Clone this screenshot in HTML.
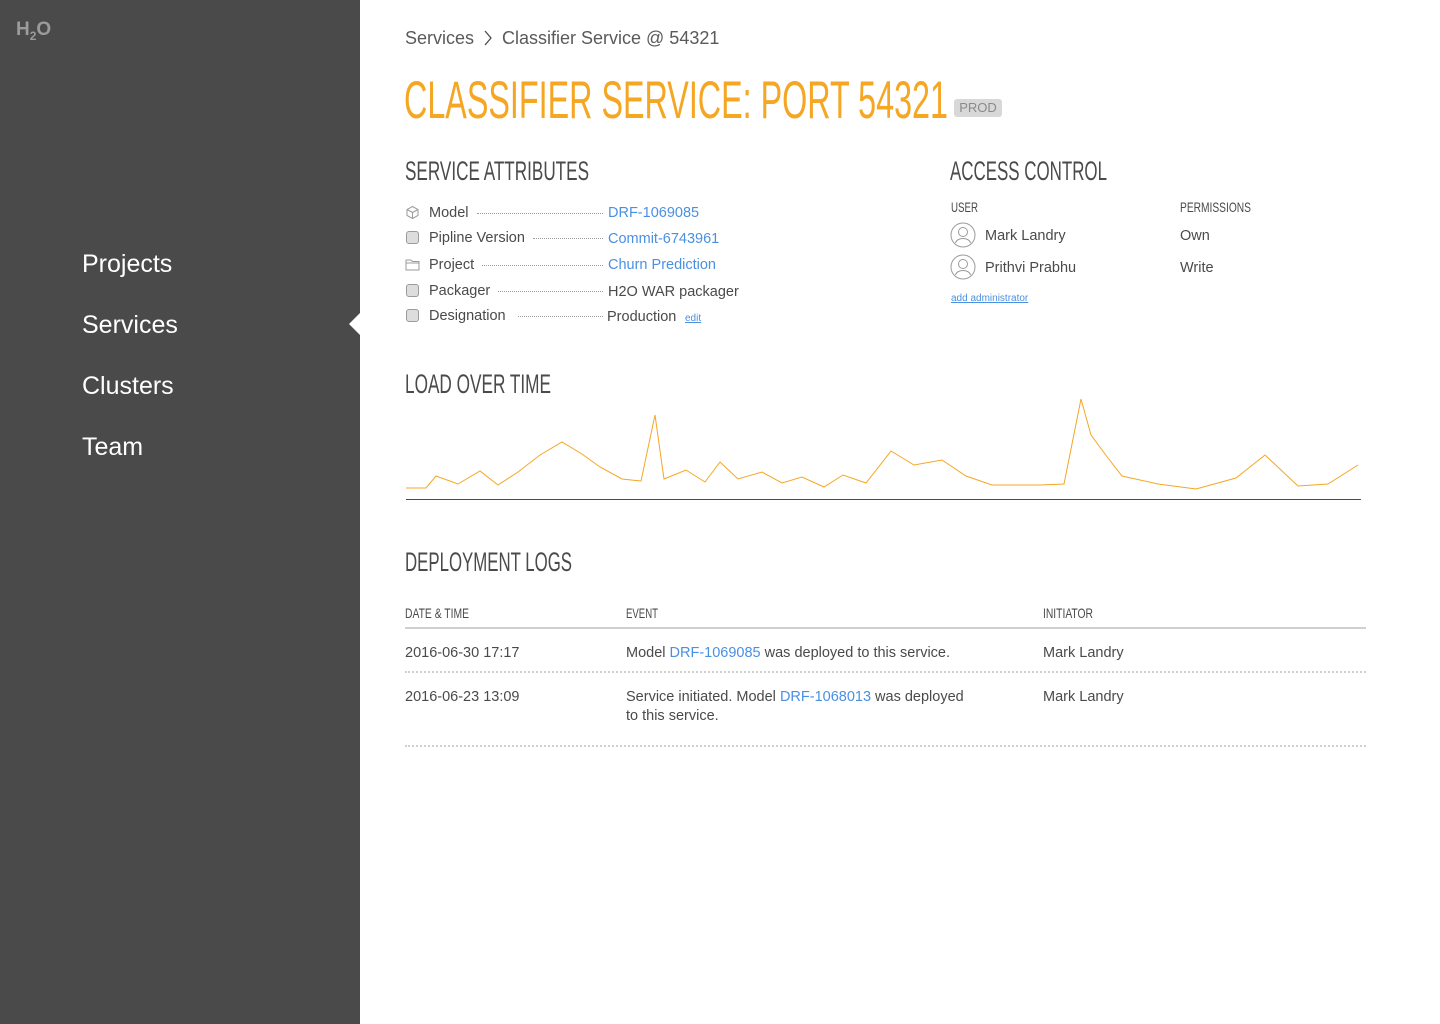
<!DOCTYPE html>
<html><head><meta charset="utf-8">
<style>
*{margin:0;padding:0;box-sizing:border-box}
body{width:1440px;height:1024px;position:relative;background:#fff;font-family:"Liberation Sans",sans-serif;color:#4a4a4a;overflow:hidden}
.side{position:absolute;left:0;top:0;width:360px;height:1024px;background:#4a4a4a}
.logo{position:absolute;left:16px;top:19px;color:#9b9b9b;font-weight:bold;font-size:19px;letter-spacing:0}
.logo sub{font-size:12px;vertical-align:-5px}
.nav{position:absolute;left:82px;color:#fff;font-size:25px}
.notch{position:absolute;left:349px;top:313px;width:0;height:0;border-top:11px solid transparent;border-bottom:11px solid transparent;border-right:11px solid #fff}
.a{position:absolute;white-space:nowrap}
.c{font-family:"Liberation Sans Narrow","Liberation Sans",sans-serif;font-stretch:condensed;transform-origin:0 0;display:inline-block}
.blue{color:#4a90e2}
.s15{font-size:14.5px}
.dots{position:absolute;border-top:1px dotted #9b9b9b;height:0}
.box{position:absolute;left:406px;width:13px;height:13px;border:1px solid #9b9b9b;border-radius:3px;background:#ddd}
.ulink{font-size:10px;color:#4a90e2;text-decoration:underline}
</style></head><body>
<div class="side">
<div class="logo">H<sub>2</sub>O</div>
<div class="nav" style="top:250px">Projects</div>
<div class="nav" style="top:311px">Services</div>
<div class="nav" style="top:372px">Clusters</div>
<div class="nav" style="top:433px">Team</div>
</div>
<div class="notch"></div>

<div class="a" style="left:405px;top:28px;font-size:18px;color:#5a5a5a">Services</div>
<svg class="a" style="left:483px;top:30px" width="10" height="16"><path d="M2 1 L8 8 L2 15" fill="none" stroke="#4a4a4a" stroke-width="1.3"/></svg>
<div class="a" style="left:502px;top:28px;font-size:18px;color:#5a5a5a">Classifier Service @ 54321</div>

<div class="a c" data-w="544" style="left:404px;top:74px;font-size:53px;color:#f5a623;line-height:53px">CLASSIFIER SERVICE: PORT 54321</div>
<div class="a" style="left:954px;top:99px;width:48px;height:18px;background:#d8d8d8;border-radius:3px;color:#8a8a8a;font-size:13px;text-align:center;line-height:18px">PROD</div>

<div class="a c" data-w="184" style="left:405px;top:156px;font-size:27px;line-height:30px">SERVICE ATTRIBUTES</div>
<div class="a c" data-w="157" style="left:950px;top:156px;font-size:27px;line-height:30px">ACCESS CONTROL</div>

<svg class="a" style="left:405px;top:205px" width="15" height="15"><path d="M7.5 1.5 L13 4.5 V10.5 L7.5 13.5 L2 10.5 V4.5 Z M2 4.5 L7.5 7.5 L13 4.5 M7.5 7.5 V13.5" fill="none" stroke="#9b9b9b" stroke-width="1"/></svg>
<div class="a s15" style="left:429px;top:205px">Model</div>
<div class="dots" style="left:477px;width:126px;top:213px"></div>
<div class="a s15 blue" style="left:608px;top:205px">DRF-1069085</div>

<div class="box" style="top:231px"></div>
<div class="a s15" style="left:429px;top:230px">Pipline Version</div>
<div class="dots" style="left:533px;width:70px;top:238px"></div>
<div class="a s15 blue" style="left:608px;top:231px">Commit-6743961</div>

<svg class="a" style="left:405px;top:258px" width="15" height="13"><path d="M1 2 H6 L7.5 3.5 H14 V12 H1 Z M1 5 H14" fill="none" stroke="#9b9b9b" stroke-width="1"/></svg>
<div class="a s15" style="left:429px;top:257px">Project</div>
<div class="dots" style="left:482px;width:121px;top:265px"></div>
<div class="a s15 blue" style="left:608px;top:257px">Churn Prediction</div>

<div class="box" style="top:284px"></div>
<div class="a s15" style="left:429px;top:283px">Packager</div>
<div class="dots" style="left:498px;width:105px;top:291px"></div>
<div class="a s15" style="left:608px;top:284px">H2O WAR packager</div>

<div class="box" style="top:309px"></div>
<div class="a s15" style="left:429px;top:308px">Designation</div>
<div class="dots" style="left:518px;width:85px;top:316px"></div>
<div class="a s15" style="left:607px;top:309px">Production</div>
<div class="a ulink" style="left:685px;top:313px">edit</div>

<div class="a c" data-w="27" style="left:951px;top:199px;font-size:14px">USER</div>
<div class="a c" data-w="71" style="left:1180px;top:199px;font-size:14px">PERMISSIONS</div>
<svg class="a" style="left:950px;top:222px" width="26" height="26"><circle cx="13" cy="13" r="12" fill="none" stroke="#9b9b9b"/><circle cx="13" cy="10" r="4.5" fill="none" stroke="#9b9b9b"/><path d="M5.5 21 C7 15 19 15 20.5 21" fill="none" stroke="#9b9b9b"/></svg>
<div class="a s15" style="left:985px;top:228px">Mark Landry</div>
<div class="a s15" style="left:1180px;top:228px">Own</div>
<svg class="a" style="left:950px;top:254px" width="26" height="26"><circle cx="13" cy="13" r="12" fill="none" stroke="#9b9b9b"/><circle cx="13" cy="10" r="4.5" fill="none" stroke="#9b9b9b"/><path d="M5.5 21 C7 15 19 15 20.5 21" fill="none" stroke="#9b9b9b"/></svg>
<div class="a s15" style="left:985px;top:260px">Prithvi Prabhu</div>
<div class="a s15" style="left:1180px;top:260px">Write</div>
<div class="a ulink" style="left:951px;top:293px">add administrator</div>

<div class="a c" data-w="146" style="left:405px;top:369px;font-size:27px;line-height:30px">LOAD OVER TIME</div>
<svg class="a" style="left:0;top:0" width="1440" height="520">
<polyline fill="none" stroke="#f5a623" stroke-width="1" points="406,488 426,488 436,476 458,484 480,471 498,485 518,472 540,455 562,442 582,454 600,467 622,479 641,481 655,415 664,479 686,470 705,482 720,462 738,479 762,472 782,483 802,477 824,487 843,475 866,483 891,451 914,465 942,460 966,476 992,485 1040,485 1064,484 1081,399 1091,435 1108,458 1122,476 1158,484 1196,489 1236,478 1265,455 1298,486 1328,484 1358,465"/>
<line x1="406" y1="499.5" x2="1361" y2="499.5" stroke="#4a4a4a" stroke-width="1"/>
</svg>

<div class="a c" data-w="167" style="left:405px;top:547px;font-size:27px;line-height:30px">DEPLOYMENT LOGS</div>
<div class="a c" data-w="64" style="left:405px;top:605px;font-size:14px">DATE &amp; TIME</div>
<div class="a c" data-w="32" style="left:626px;top:605px;font-size:14px">EVENT</div>
<div class="a c" data-w="50" style="left:1043px;top:605px;font-size:14px">INITIATOR</div>
<div class="a" style="left:405px;top:627px;width:961px;height:2px;background:#d0d0d0"></div>
<div class="a s15" style="left:405px;top:645px">2016-06-30 17:17</div>
<div class="a s15" style="left:626px;top:645px">Model <span class="blue">DRF-1069085</span> was deployed to this service.</div>
<div class="a s15" style="left:1043px;top:645px">Mark Landry</div>
<div class="dots" style="left:405px;width:961px;top:671px;border-top:2px dotted #d0d0d0"></div>
<div class="a s15" style="left:405px;top:689px">2016-06-23 13:09</div>
<div class="a s15" style="left:626px;top:688px;line-height:19px">Service initiated. Model <span class="blue">DRF-1068013</span> was deployed<br>to this service.</div>
<div class="a s15" style="left:1043px;top:689px">Mark Landry</div>
<div class="dots" style="left:405px;width:961px;top:745px;border-top:2px dotted #d0d0d0"></div>
<script>
document.querySelectorAll('[data-w]').forEach(function(e){var w=e.getBoundingClientRect().width;var t=+e.getAttribute('data-w');if(w>0)e.style.transform='scaleX('+(t/w)+')';});
</script>
</body></html>
